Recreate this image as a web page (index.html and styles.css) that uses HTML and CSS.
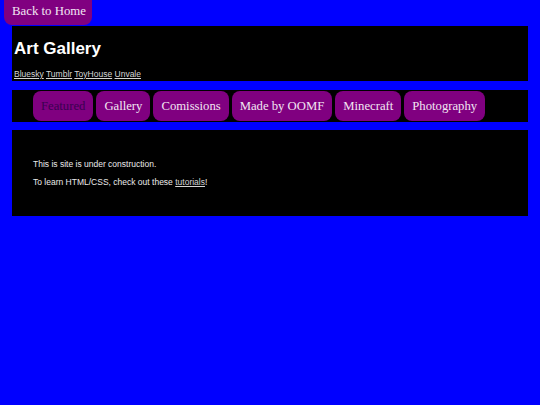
FILE: index.html
```html
<!DOCTYPE html>
<html>
<head>
<meta charset="utf-8">
<link rel="stylesheet" href="styles.css">
</head>
<body>
<a class="home-btn" href="#">Back to Home</a>
<header class="header">
  <h1 class="title">Art Gallery</h1>
  <div class="socials"><a href="#">Bluesky</a> <a href="#">Tumblr</a> <a href="#">ToyHouse</a> <a href="#">Unvale</a></div>
</header>
<nav class="nav">
  <a class="nav-btn active" href="#">Featured</a>
  <a class="nav-btn" href="#">Gallery</a>
  <a class="nav-btn" href="#">Comissions</a>
  <a class="nav-btn" href="#">Made by OOMF</a>
  <a class="nav-btn" href="#">Minecraft</a>
  <a class="nav-btn" href="#">Photography</a>
</nav>
<main class="content">
  <p>This is site is under construction.</p>
  <p>To learn HTML/CSS, check out these <a href="#">tutorials</a>!</p>
</main>
</body>
</html>
```
FILE: styles.css
```css
html, body {
  margin: 0;
  padding: 0;
  background: #0000ff;
}
body {
  font-family: "Liberation Sans", Arial, sans-serif;
  color: #ebebeb;
}
.home-btn {
  display: inline-block;
  margin-left: 4px;
  width: 88px;
  box-sizing: border-box;
  height: 25px;
  padding: 4px 0 0 8px;
  background: #800080;
  color: #f2e6f2;
  font-family: "Liberation Serif", "Times New Roman", serif;
  font-size: 12.8px;
  line-height: 15px;
  text-decoration: none;
  border-radius: 0 0 8px 8px;
  vertical-align: top;
}
.header {
  margin: 1px 12px 0;
  background: #000;
  height: 55px;
  box-sizing: border-box;
  padding: 13px 2px 0;
}
.title {
  margin: 0;
  font-size: 17px;
  line-height: 20px;
  font-weight: bold;
  color: #fff;
}
.socials {
  margin-top: 10px;
  font-size: 8.5px;
  line-height: 10px;
}
.socials a, .content a {
  color: #d6d6d6;
}
.nav {
  margin: 9px 12px 0;
  background: #000;
  display: flex;
  gap: 3px;
  padding: 1px 21px;
  height: 32px;
  box-sizing: border-box;
}
.nav-btn {
  display: flex;
  align-items: center;
  height: 30px;
  padding: 0 8px;
  background: #800080;
  color: #f2e6f2;
  font-family: "Liberation Serif", "Times New Roman", serif;
  font-size: 12.7px;
  text-decoration: none;
  border-radius: 8px;
}
.nav-btn.active {
  color: #3a0050;
}
.content {
  display: block;
  margin: 8px 12px 0;
  background: #000;
  padding: 29px 21px;
  font-size: 8.5px;
  line-height: 10px;
}
.content p {
  margin: 0 0 8px;
}
.content p:last-child {
  margin-bottom: 0;
}
```
